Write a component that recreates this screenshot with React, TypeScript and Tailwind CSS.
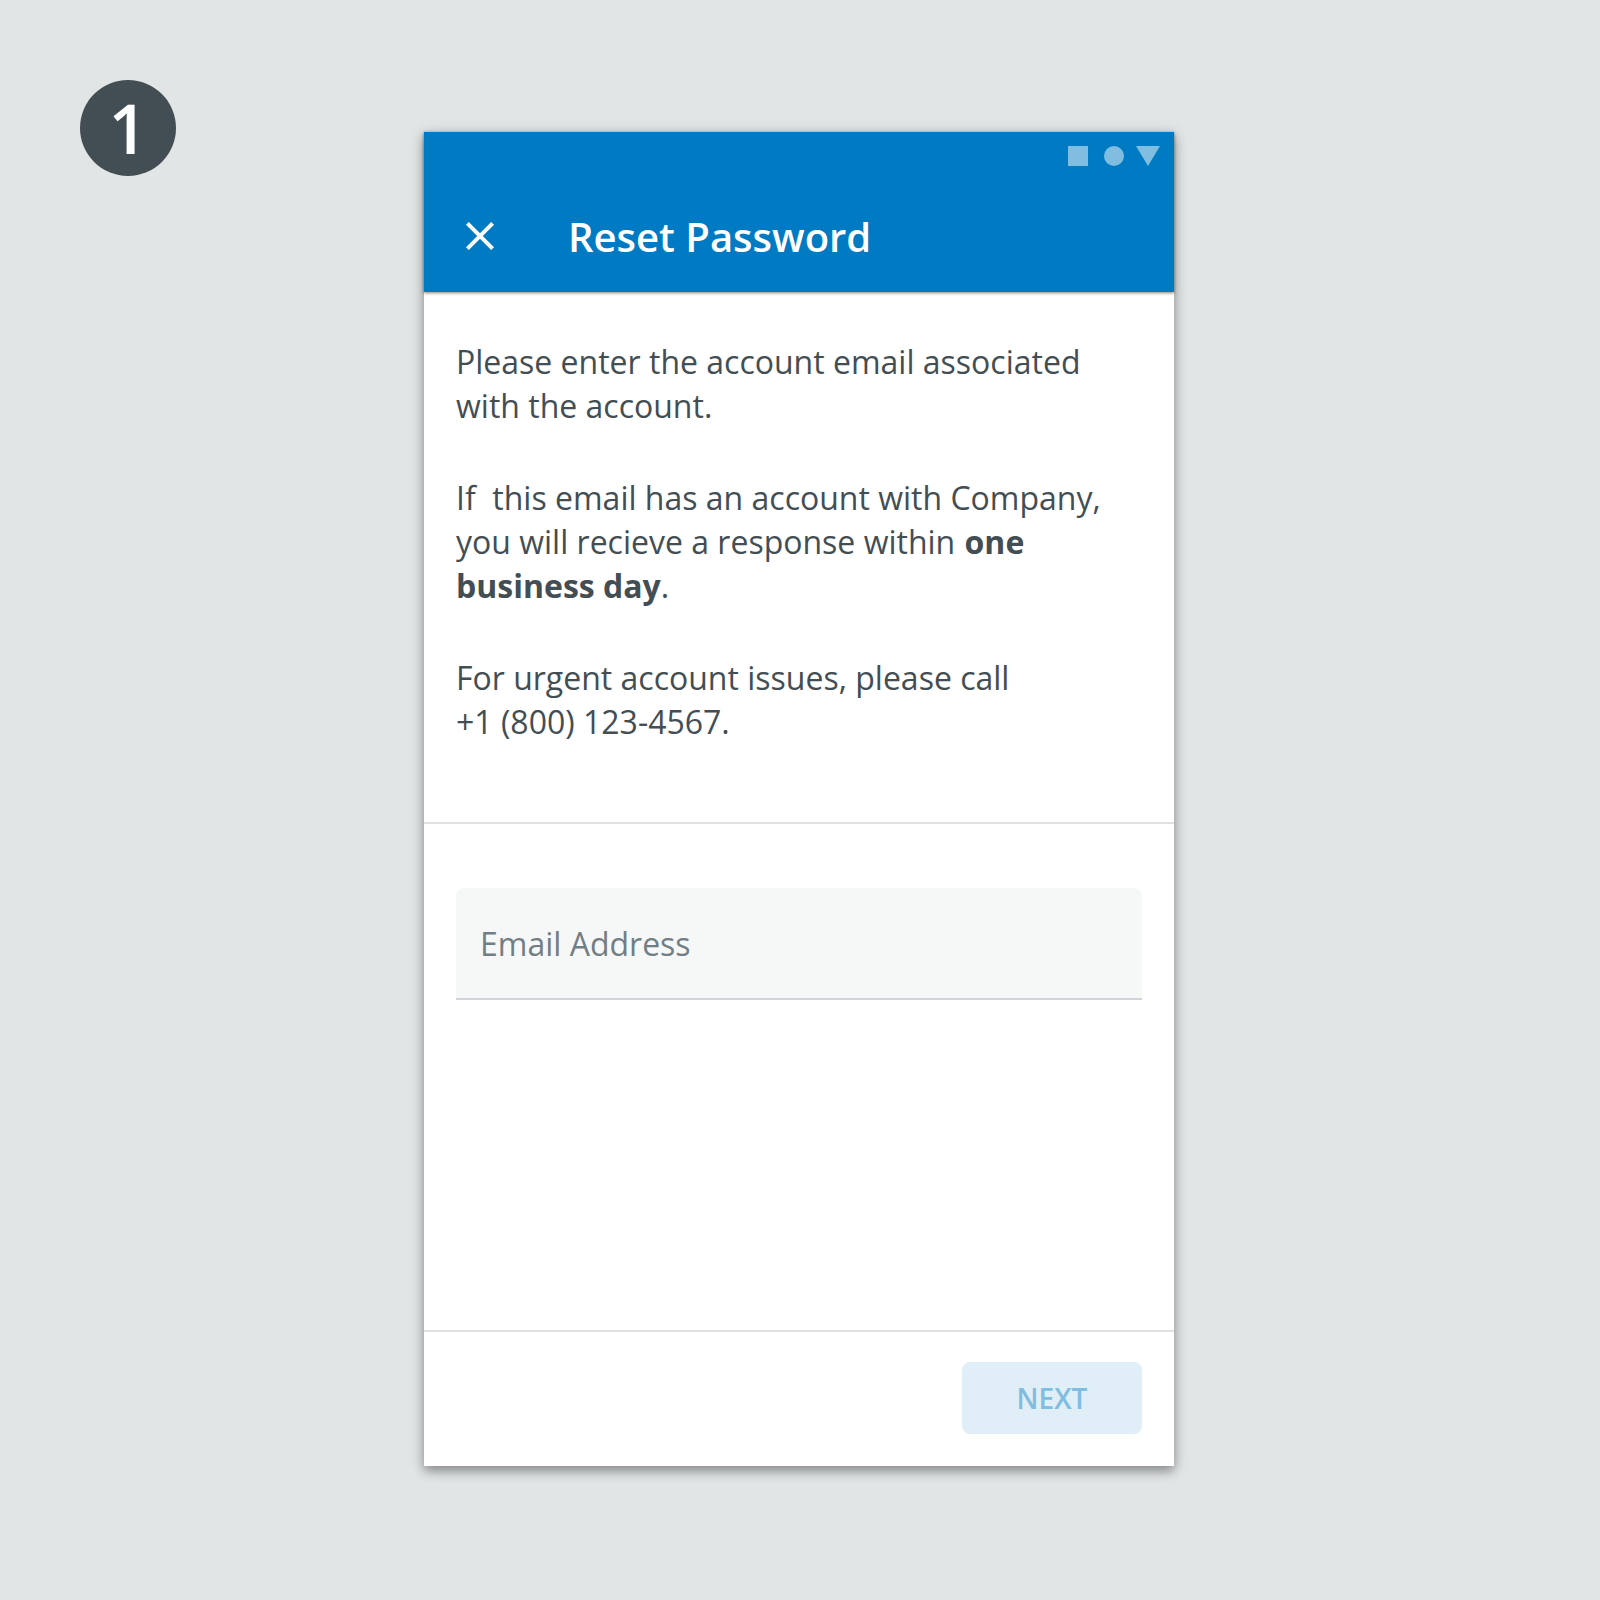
const text = "text-[32px] leading-[44px] whitespace-pre text-[#434e54]";

export default function App() {
  return (
    <div className="flex h-[1600px] w-[1600px] items-start bg-[#e1e5e6] pl-20 font-['Open_Sans',sans-serif]">
      <div className="mt-20 flex size-24 items-center justify-center rounded-full bg-[#434e54] text-[68px] leading-none font-semibold text-white">
        <span>1</span>
      </div>
      <div className="mt-[132px] ml-[248px] flex h-[1334px] w-[750px] flex-col bg-white shadow-[0_5px_10px_rgba(0,0,0,0.34),0_2px_16px_rgba(0,0,0,0.12)]">
        <header className="relative h-40 bg-[#007bc3] shadow-[0_1px_3px_rgba(0,0,0,0.5)]">
          <div className="flex h-12 justify-end">
            <svg width="110" height="48" viewBox="0 0 110 48" fill="#80bde1">
              <rect x="4" y="14" width="20" height="20" />
              <circle cx="50" cy="24" r="10" />
              <path d="M72 14h24l-12 20z" />
            </svg>
          </div>
          <div className="flex h-28 items-center pl-10">
            <svg width="32" height="32" viewBox="0 0 32 32" stroke="#fff" strokeWidth="4">
              <path d="M3.4 3.4l25.2 25.2M28.6 3.4L3.4 28.6" />
            </svg>
            <h1 className="mt-[2px] ml-[72px] text-[40px] leading-[56px] font-semibold text-white">Reset Password</h1>
          </div>
        </header>
        <section className="flex h-[532px] flex-col gap-12 border-b-2 border-[#dfe0e1] px-8 pt-12">
          <div className={text}>
            <p>Please enter the account email associated</p>
            <p>with the account.</p>
          </div>
          <div className={text}>
            <p>{"If  this email has an account with Company,"}</p>
            <p>
              {"you will recieve a response within "}
              <b className="ml-px font-bold">one</b>
            </p>
            <p>
              <b className="font-bold">business day</b>.
            </p>
          </div>
          <div className={text}>
            <p>For urgent account issues, please call</p>
            <p>+1 (800) 123-4567.</p>
          </div>
        </section>
        <section className="flex-1 px-8 pt-16">
          <div className="flex h-28 items-center rounded-t-lg border-b-2 border-[#d1d5d9] bg-[#f6f8f8] px-6 pt-[2px] text-[32px] leading-[44px] text-[#727e85]">
            Email Address
          </div>
        </section>
        <footer className="flex h-[136px] justify-end border-t-2 border-[#dfe0e1] px-8 pt-[30px]">
          <button className="h-[72px] w-[180px] rounded-lg bg-[#e0eef7] text-[28px] font-semibold text-[#80bde1]">NEXT</button>
        </footer>
      </div>
    </div>
  );
}
